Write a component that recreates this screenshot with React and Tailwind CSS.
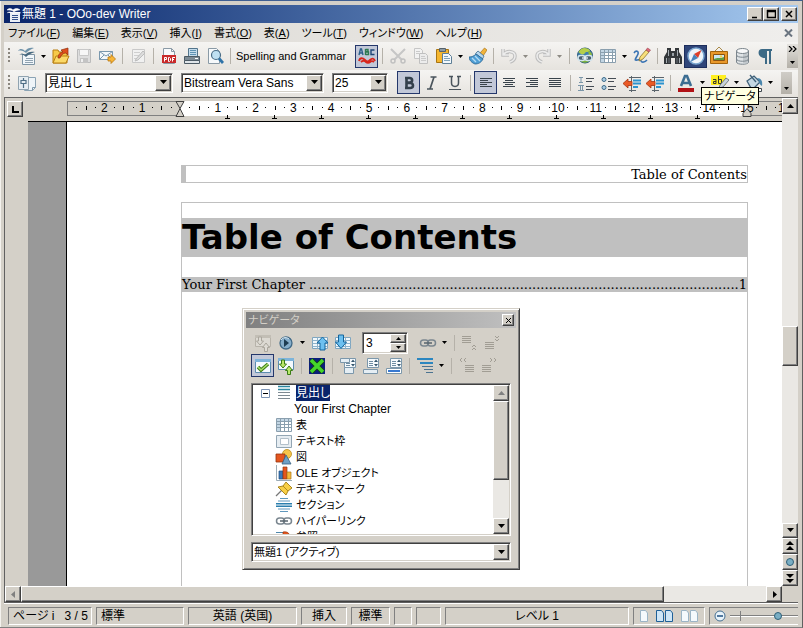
import React, { useState } from 'react'
import clsx from 'clsx'

const UI_FONT = "font-['Liberation_Sans','Noto_Sans_CJK_JP',sans-serif] [font-feature-settings:'palt']"
const raised =
  'bg-[#d4d0c8] border border-t-white border-l-white border-r-[#404040] border-b-[#404040] shadow-[inset_-1px_-1px_0_#808080]'
const sunken = 'border border-t-[#808080] border-l-[#808080] border-r-white border-b-white'
const field =
  'bg-white border border-t-[#808080] border-l-[#808080] border-r-white border-b-white shadow-[inset_1px_1px_0_#404040,inset_-1px_-1px_0_#d4d0c8]'

const Svg = ({ children, w = 18, h = 18 }) => (
  <svg width={w} height={h} viewBox={`0 0 ${w} ${h}`} fill="none" aria-hidden="true" className="shrink-0">
    {children}
  </svg>
)

const Tri = ({ dir = 'down', color = '#000' }) => {
  const d = {
    down: 'M0 1h7L3.500 5z',
    up: 'M0 5h7L3.500 1z',
    left: 'M5 0v7L1 3.500z',
    right: 'M2 0v7l4-3.500z',
  }[dir]
  return (
    <svg width="7" height="7" viewBox="0 0 7 7" aria-hidden="true" className="shrink-0">
      <path d={d} fill={color} />
    </svg>
  )
}

const WriterIcon = () => (
  <Svg>
    <path d="M4.500 7.500h12v10h-12z" fill="#f1f6fa" stroke="#7f95a5" />
    <path d="M0 4c2-3 5-2 7 0 2-3 6-4 9-3-3 1-6 3-8 5C6 4 3 3 0 4z" fill="#6f93aa" />
    <path d="M1 8c2-2 4-2 6 0 2-3 6-4 10-3-4 1-7 3-9 5-2-2-4-3-7-2z" fill="#46687f" />
    <path d="M8 11.500h7M7 13.500h8M7 15.500h8" stroke="#8fa2b0" />
  </Svg>
)

const OpenIcon = () => (
  <Svg>
    <path d="M1 3h5l1 2h8v11H1z" fill="#f7c948" stroke="#b97f10" />
    <path d="M4 9h13l-3 7H1z" fill="#fbd968" stroke="#b97f10" />
    <path d="M6 11c0-4 3-6 5-6L9 3l7-2v7l-2-2c-3 0-5 2-6 5z" fill="#e0501e" stroke="#8f2f0c" strokeWidth=".7" />
  </Svg>
)

const SaveIcon = () => (
  <Svg>
    <path d="M2.500 2.500h13v13h-13z" fill="#dedede" stroke="#bcbcbc" />
    <path d="M4.500 2.500h9v6h-9z" fill="#f7f7f7" stroke="#c8c8c8" />
    <path d="M5 11h8v5H5z" fill="#c4c4c4" />
    <path d="M6 12h2v3H6z" fill="#f0f0f0" />
  </Svg>
)

const MailIcon = () => (
  <Svg>
    <path d="M1.500 4.500h13v8h-13z" fill="#f4f8fb" stroke="#7a98ae" />
    <path d="M1.500 4.500L8 9l6.500-4.500M1.500 12.500L6 8M14.500 12.500L10 8" stroke="#7a98ae" />
    <path d="M10 10h3V7.500L17.500 12 13 16.500V14h-3z" fill="#f7b538" stroke="#b9770e" strokeWidth=".8" />
  </Svg>
)

const EditIcon = () => (
  <Svg>
    <path d="M3.500 2.500h12v13h-12z" fill="#f1f1f1" stroke="#c9c9c9" />
    <path d="M5 5.500h6M5 8.500h5M5 11.500h4" stroke="#cfcfcf" />
    <path d="M7 12l7-8 2 2-7 7-3 1z" fill="#dcdcdc" stroke="#bdbdbd" />
  </Svg>
)

const PdfIcon = () => (
  <Svg>
    <path d="M3.500 1.500h8l3 3v12h-11z" fill="#f7fafc" stroke="#8a9aa6" />
    <path d="M11.500 1.500v3h3" stroke="#8a9aa6" />
    <path d="M2 8h14v8H2z" fill="#c92a2a" />
    <path d="M4.500 14.500v-4h2v2h-2M8.500 10.500v4h1l1-1v-2l-1-1zM12.500 14.500v-4H15M12.500 12.500H14" stroke="#fff" />
  </Svg>
)

const PrintIcon = () => (
  <Svg>
    <path d="M5.500 1.500h9v8h-9z" fill="#c4dcec" stroke="#53758c" />
    <path d="M7 3.500h6M7 5.500h6M7 7.500h6" stroke="#5f93b3" />
    <path d="M1.500 9.500h15v4h-15z" fill="#7d8b95" stroke="#4c5a64" />
    <path d="M1.500 13.500h15v3h-15z" fill="#dfe5e9" stroke="#4c5a64" />
    <path d="M12 11.500h3" stroke="#fff" />
  </Svg>
)

const PreviewIcon = () => (
  <Svg>
    <path d="M2.500 1.500h8l3 3v12h-11z" fill="#f6f9fb" stroke="#8a9aa6" />
    <circle cx="10" cy="8" r="4.500" fill="#bfe0f2" stroke="#4a6c86" strokeWidth="1.200" />
    <path d="M13 11.500l4 4.500" stroke="#2f73a8" strokeWidth="2.800" />
  </Svg>
)

const AbcIcon = () => (
  <Svg>
    <path d="M1 8l1.500-6h1L5 8M1.500 6h3" stroke="#2c5f8a" strokeWidth="1.400" />
    <path d="M7.500 2v6M7.500 2.500H10v2H7.500M7.500 5h3v2.500h-3" stroke="#2d7a50" strokeWidth="1.400" />
    <path d="M16.500 3H13v4.500h3.500" stroke="#1f4778" strokeWidth="1.400" />
    <path d="M1 14c1-4 4-3 6-1s3 2 5 0 4-2 5 1M3 15c2-2 4-1 5 0s3 1 4 0 3-1 4 0" stroke="#d8261c" strokeWidth="1.900" />
  </Svg>
)

const CutIcon = () => (
  <Svg>
    <path d="M2 2l11 11M16 2L5 13" stroke="#c6c6c6" strokeWidth="2" />
    <circle cx="4" cy="14" r="2" stroke="#c0c0c0" strokeWidth="1.500" />
    <circle cx="14" cy="14" r="2" stroke="#c0c0c0" strokeWidth="1.500" />
  </Svg>
)

const CopyIcon = () => (
  <Svg>
    <path d="M2.500 1.500h6l2 2v8h-8z" fill="#f2f2f2" stroke="#c6c6c6" />
    <path d="M7.500 6.500h6l2 2v8h-8z" fill="#ececec" stroke="#c0c0c0" />
    <path d="M4 4.500h4M4 6.500h3M9 9.500h4M9 11.500h5M9 13.500h5" stroke="#cacaca" />
  </Svg>
)

const PasteIcon = () => (
  <Svg>
    <path d="M1.500 2.500h12v13h-12z" fill="#f5b62f" stroke="#a87412" />
    <path d="M4.500 1.500h6v3h-6z" fill="#8d9aa3" stroke="#55626b" />
    <path d="M7.500 6.500h6l3 3v7h-9z" fill="#f3f8fc" stroke="#5e7f96" />
    <path d="M9 9.500h4M9 11.500h6M9 13.500h6" stroke="#7fa3ba" />
  </Svg>
)

const BrushIcon = () => (
  <Svg>
    <path d="M11 6l4.500-5L18 3l-4 6z" fill="#f2b43a" stroke="#a7741b" strokeWidth=".7" />
    <path d="M9 4l6 5-1.500 3L6.500 6.500z" fill="#b9d8ee" stroke="#3f6d8f" strokeWidth=".8" />
    <path d="M7 7l7 5c-2 4-5 5-8 5C3 16 0 13 0 10c3 0 5-1 7-3z" fill="#4f9ed4" stroke="#27628f" strokeWidth=".8" />
    <path d="M3 11l4 4M6 9l5 5" stroke="#b3dcf5" strokeWidth="1.300" />
  </Svg>
)

const UndoIcon = ({ flip }) => (
  <Svg>
    <g transform={flip ? 'translate(18 0) scale(-1 1)' : undefined}>
      <path d="M3 2v6h6M3.500 7.500C7 3 15 4 15 9c0 3-2 5-5 6" stroke="#bdbdbd" strokeWidth="3.500" />
      <path d="M3 2v6h6M3.500 7.500C7 3 15 4 15 9c0 3-2 5-5 6" stroke="#ececec" strokeWidth="1.500" />
    </g>
  </Svg>
)

const GlobeIcon = () => (
  <Svg>
    <circle cx="9" cy="8.500" r="7.500" fill="#3f7fae" stroke="#2a5878" />
    <path d="M2.500 5C5 0 10 0 14 3c-1 3-4 1-5 3s-4 2-6.500-1z" fill="#b5cf4a" />
    <path d="M12 4c2 0 4 2 4 4h-3z" fill="#8fbc3f" />
    <path d="M4 13c2-2 8-2 10 0-2 3-8 4-10 0z" fill="#7bb13d" />
    <rect x="2" y="8.500" width="7" height="5" rx="2.500" fill="#4a6070" stroke="#d4e6ee" strokeWidth="1.500" />
    <rect x="9" y="8.500" width="7" height="5" rx="2.500" fill="#4a6070" stroke="#d4e6ee" strokeWidth="1.500" />
    <path d="M6 11h6" stroke="#eef6fa" strokeWidth="1.300" />
  </Svg>
)

const TableIcon = () => (
  <Svg>
    <path d="M1.500 2.500h15v13h-15z" fill="#fff" stroke="#8a9fae" />
    <path d="M2 3h14v3H2z" fill="#c3d6e4" />
    <path d="M2 3h3v12H2z" fill="#c3d6e4" />
    <path d="M1.500 5.500h15M1.500 8.500h15M1.500 11.500h15M5.500 2.500v13M9.500 2.500v13M13.500 2.500v13" stroke="#8a9fae" />
  </Svg>
)

const DrawIcon = () => (
  <Svg>
    <path d="M1 6c2-3 5-2 4 1s-5 7-1 6 3-1 4 1 4 1 6-1" stroke="#3a74b4" strokeWidth="1.600" />
    <path d="M7 10l6-7 3 2-6 7-4 2z" fill="#f8df7a" stroke="#8d7430" strokeWidth=".8" />
    <path d="M13 3l1.500-2 3 2L16 5z" fill="#e06a78" stroke="#9b4450" strokeWidth=".6" />
  </Svg>
)

const FindIcon = () => (
  <Svg>
    <path d="M3 1h4v3h4V1h4v4l3 5v7h-7v-6H7v6H0v-7l3-5z" fill="#33373a" />
    <path d="M4.500 3v6M13.500 3v6M2.500 11v5M15.500 11v5" stroke="#a5acb1" />
    <path d="M5 11v5M13 11v5" stroke="#6a7176" />
    <path d="M8 6h2v3H8z" fill="#9aa1a6" />
  </Svg>
)

const CompassIcon = () => (
  <Svg>
    <circle cx="9" cy="9" r="8" fill="#f0f5fa" stroke="#7ba7d0" strokeWidth="1.500" />
    <path d="M14.500 3L11 11 7 7z" fill="#e0402a" />
    <path d="M3.500 15L11 11 7 7z" fill="#4a84bc" />
  </Svg>
)

const GalleryIcon = () => (
  <Svg>
    <path d="M9 0L5 4M9 0l4 4" stroke="#a98a4a" />
    <path d="M.5 4.500h17v12H.5z" fill="#e9982a" stroke="#a3620c" />
    <path d="M3.500 7.500h11v6h-11z" fill="#cbe6f2" stroke="#8a5210" />
    <path d="M4 12c3-2 6 0 10-2v3H4z" fill="#5f9c46" />
    <circle cx="11" cy="9.500" r="1.200" fill="#f8d24a" />
  </Svg>
)

const DbIcon = () => (
  <Svg>
    <path d="M3.500 4v11c0 3 12 3 12 0V4z" fill="#dfe3e6" stroke="#7b858c" />
    <path d="M10 6h5v10l-5 1z" fill="#c3c9cd" />
    <ellipse cx="9.500" cy="4" rx="6" ry="2.500" fill="#f8f9fa" stroke="#7b858c" />
    <path d="M3.500 8c0 3 12 3 12 0M3.500 12c0 3 12 3 12 0" stroke="#7b858c" />
    <path d="M15.500 4v11" stroke="#7b858c" />
  </Svg>
)

const PilcrowIcon = () => (
  <Svg>
    <path d="M6 2h10v2h-1v13h-2V4h-2v13H9v-6C1 11 1 2 6 2z" fill="#3c6a86" />
  </Svg>
)

const StylesIcon = () => (
  <Svg>
    <path d="M6.500 3.500h11v10l-3 3h-8z" fill="#eef4f8" stroke="#8ba3b4" />
    <path d="M.5 2.500h10v13H.5z" fill="#e6edf2" stroke="#90a3b0" />
    <path d="M3 6.500h5v3H3zM5.500 4v2M5.500 9.500V14" stroke="#4f6f86" strokeWidth="1.200" />
    <path d="M14.500 16.500v-3h3" stroke="#7d98aa" />
  </Svg>
)

const BoldIcon = () => (
  <Svg>
    <path d="M5 4h4.500c3.500 0 3.500 4.500 0 4.500H6M6 9h4c4 0 4 5 0 5H5M6.500 3v12" stroke="#33404c" strokeWidth="2.600" />
  </Svg>
)
const ItalicIcon = () => (
  <Svg>
    <path d="M7.500 3h6M4 15h6M11 3L7 15" stroke="#4a545c" strokeWidth="1.700" />
  </Svg>
)
const UnderlineIcon = () => (
  <Svg>
    <path d="M5.500 2v7c0 4.500 7 4.500 7 0V2M3 2.500h4M11 2.500h4" stroke="#4a545c" strokeWidth="1.500" />
    <path d="M3 15.500h12" stroke="#4a545c" />
  </Svg>
)

const AlignIcon = ({ kind }) => {
  const rows = {
    left: [[3, 15], [3, 11], [3, 15], [3, 10], [3, 15]],
    center: [[3, 15], [5, 13], [3, 15], [5, 13], [3, 15]],
    right: [[3, 15], [7, 15], [3, 15], [7, 15], [3, 15]],
    justify: [[3, 15], [3, 15], [3, 15], [3, 15], [3, 15]],
  }[kind]
  return (
    <Svg>
      <path d={rows.map(([a, b], i) => `M${a} ${4.5 + i * 2}H${b}`).join('')} stroke="#39434b" />
    </Svg>
  )
}

const NumberingIcon = () => (
  <Svg>
    <path d="M2 3.500h4M4 4v4M2 8.500h4M1 11.500h6M3.500 12v4M5.500 12v4M1 16.500h6" stroke="#7b96a8" />
    <path d="M9 4.500h8M9 7.500h6M9 12.500h8M9 15.500h6" stroke="#444c54" strokeWidth="1.200" />
  </Svg>
)
const BulletsIcon = () => (
  <Svg>
    <circle cx="4" cy="5.500" r="2" fill="#a9cbe2" stroke="#3c6b8a" />
    <circle cx="4" cy="13.500" r="2" fill="#a9cbe2" stroke="#3c6b8a" />
    <path d="M8 4.500h8M8 7.500h6M8 12.500h8M8 15.500h6" stroke="#444c54" strokeWidth="1.200" />
  </Svg>
)
const IndentIcon = () => (
  <Svg>
    <path d="M6 3.500h12M6 16.500h7M8.500 2v16" stroke="#5b646b" />
    <path d="M10 6.500h8M10 9.500h8M10 13h5" stroke="#2c93cf" strokeWidth="2" />
    <path d="M0 9.500L5 5v2.500h4v4H5V14z" fill="#ea5a26" stroke="#a53410" strokeWidth=".8" />
  </Svg>
)
const FontColorIcon = () => (
  <Svg>
    <path d="M4 12L8 2h2l4 10M5.500 9h7" stroke="#3c6d92" strokeWidth="2.600" />
    <path d="M1 14h16v4H1z" fill="#b11116" />
  </Svg>
)
const HighlightIcon = () => (
  <Svg>
    <path d="M0 1h15v10H0z" fill="#ffee20" />
    <path d="M2 5.500h3v4H2.500v-2H5M7.500 2v7.500h3v-4H8" stroke="#3b3b2a" />
    <path d="M9 11l6-7 3 2-6 7-4 1z" fill="#c9d3da" stroke="#56646e" strokeWidth=".8" />
    <path d="M2 14h11v3H2z" fill="#ffee20" />
  </Svg>
)
const FillIcon = () => (
  <Svg>
    <path d="M2 7l7-5 6 6-6 6H6z" fill="#c5d8e4" stroke="#3f6078" strokeWidth="1.300" />
    <path d="M5 1l6 7" stroke="#3f6078" strokeWidth="1.300" />
    <path d="M12 4c4 0 6 3 5 8-2-1-3-3-3-5z" fill="#4a86ad" />
    <path d="M2.500 14.500h14v3h-14z" fill="#fff" stroke="#40484e" />
  </Svg>
)

// navigator
const SwapIcon = ({ active }) => (
  <Svg>
    <path d="M1.500 1.500h15v11h-15z" fill={active ? '#f4fafe' : '#dcd9d2'} stroke={active ? '#5d8db0' : '#b7b3aa'} />
    <path d="M1 1h16v3H1z" fill={active ? '#7db4da' : '#c2beb5'} />
    <path d="M4.500 3h3v4h2L6 11 2.500 7h2zM10.500 17.500h3v-4h2L12 9l-3.500 4.500h2z" fill={active ? '#b9e86a' : '#dedbd4'} stroke={active ? '#3b7d16' : '#aaa69d'} />
  </Svg>
)
const NavigateIcon = () => (
  <Svg>
    <circle cx="9" cy="9" r="6" fill="#86aecb" stroke="#3f6886" strokeWidth="1.300" />
    <path d="M7 5l5 4-5 4z" fill="#1d3c52" />
    <path d="M4 6c2-3 6-3 8-1" stroke="#dcecf6" />
  </Svg>
)
const PageArrowIcon = ({ up }) => (
  <Svg>
    <path d="M1.500 3.500h15v11h-15z" fill="#f1f8fc" stroke="#7fa6c0" />
    <path d="M1.500 6.500h15M1.500 9.500h15M1.500 12.500h15M6.500 3.500v11M11.500 3.500v11" stroke="#8fb3cb" />
    {up ? (
      <path d="M11.500 3L17 9h-3v7H9V9H6z" fill="#6cc0f0" stroke="#14659c" />
    ) : (
      <path d="M4.500 1h5v7h3L7 14.500 1.500 8h3z" fill="#6cc0f0" stroke="#14659c" />
    )}
  </Svg>
)
const ChainIcon = () => (
  <Svg>
    <rect x="1.500" y="6" width="8" height="6" rx="3" stroke="#7a868f" strokeWidth="1.500" />
    <rect x="8.500" y="6" width="8" height="6" rx="3" stroke="#7a868f" strokeWidth="1.500" />
    <path d="M5 9h8" stroke="#59656e" strokeWidth="1.500" />
  </Svg>
)
const LevelIcon = ({ marks }) => (
  <Svg>
    <path d={marks.lines} stroke="#a19d94" />
    <path d={marks.arrows} stroke="#a19d94" />
  </Svg>
)
const ListBoxToggleIcon = () => (
  <Svg>
    <path d="M1.500 2.500h15v13h-15z" fill="#f6fbff" stroke="#5d8db0" />
    <path d="M1 2h16v3H1z" fill="#7db4da" />
    <path d="M4 10l3 3 7-6" stroke="#3b7d16" strokeWidth="3.500" />
    <path d="M4 10l3 3 7-6" stroke="#a9e06a" strokeWidth="1.500" />
  </Svg>
)
const ReminderIcon = () => (
  <Svg>
    <path d="M1 1h16v16H1z" fill="#0b1f7a" />
    <path d="M3 3l12 12M15 3L3 15" stroke="#14430c" strokeWidth="5" />
    <path d="M3 3l12 12M15 3L3 15" stroke="#45d62c" strokeWidth="3.500" />
  </Svg>
)
const PagePartIcon = ({ part }) => (
  <Svg>
    <path d="M5.500 1.500h11v9h-11z" fill="#f5fafd" stroke="#7b97ab" />
    <path d="M7 4.500h4M7 6.500h4M7 8.500h4" stroke="#6f8da3" />
    <path d="M12 5l2-2.500L16 5zM12 7l2 2.500L16 7z" fill="#35566d" />
    {part === 'header' && <path d="M1.500 1.500h9v4h-9zM5.500 10.500h9v6h-9z" fill="#e5eef4" stroke="#7b97ab" />}
    {part === 'footer' && <path d="M1.500 12.500h14v4h-14z" fill="#e5eef4" stroke="#7b97ab" />}
    {part === 'anchor' && <path d="M1.500 11.500h15v5h-15z" fill="#fff" stroke="#7b97ab" />}
    {part === 'anchor' && <path d="M3 14h12" stroke="#3979d0" strokeWidth="2" />}
  </Svg>
)
const OutlineIcon = () => (
  <Svg>
    <path d="M1 2h16M4 6h13" stroke="#2b86c0" strokeWidth="2" />
    <path d="M6 9.500h11M8 12.500h9M10 15.500h7" stroke="#4b7391" />
  </Svg>
)

// tree
const HeadingsIcon = () => (
  <Svg h={16}>
    <path d="M3 1.500h12M3 4.500h12" stroke="#2b86a0" strokeWidth="1.400" />
    <path d="M3 7.500h12M3 10.500h12M3 13.500h12" stroke="#7e8a92" />
  </Svg>
)
const FrameIcon = () => (
  <Svg h={16}>
    <path d="M1.500 2.500h15v12h-15z" fill="#e6edf2" stroke="#93a6b4" />
    <path d="M5.500 5.500h8v6h-8z" fill="#fff" stroke="#b3c0ca" />
  </Svg>
)
const ShapesIcon = () => (
  <Svg h={16}>
    <circle cx="12" cy="5" r="4.500" fill="#f7c64a" stroke="#b98a1c" strokeWidth=".8" />
    <path d="M1 5h9v8H1z" fill="#e4561f" stroke="#95330c" strokeWidth=".8" />
    <path d="M11 6l5 9H7z" fill="#6f9fc4" stroke="#355f7f" strokeWidth=".8" />
  </Svg>
)
const OleIcon = () => (
  <Svg h={16}>
    <path d="M1.500 0v15.500H17" stroke="#9aabb6" />
    <path d="M4 6h4v8H4z" fill="#3a78ba" stroke="#1f4d7e" strokeWidth=".7" />
    <path d="M8 2h4v12H8z" fill="#e4561f" stroke="#95330c" strokeWidth=".7" />
    <path d="M12 7h4v7h-4z" fill="#f6b93b" stroke="#a8761a" strokeWidth=".7" />
  </Svg>
)
const PinIcon = () => (
  <Svg h={16}>
    <path d="M1 15l6-6" stroke="#777" strokeWidth="1.300" />
    <path d="M3 6l5-1 3-4 6 6-4 3-2 4z" fill="#f8cf45" stroke="#a07c14" strokeWidth=".9" />
    <path d="M8 5l5 5" stroke="#a07c14" strokeWidth=".8" />
  </Svg>
)
const SectionIcon = () => (
  <Svg h={16}>
    <path d="M5 1.500h8M3 4h12M3 12h12M5 14.500h8" stroke="#5f97bd" />
    <path d="M1 6.700h16M1 9.300h16" stroke="#2b7fae" strokeWidth="1.500" />
  </Svg>
)
const ReferenceIcon = () => (
  <Svg h={16}>
    <path d="M1 3.500h9M1 5.500h9M1 7.500h9M1 10h9" stroke="#4f87ab" />
    <path d="M8 3c5-1 7 2 7 6h2l-4 5-4-5h2c0-2-1-3-3-3z" fill="#e4561f" stroke="#95330c" strokeWidth=".7" />
  </Svg>
)

const Sep = () => (
  <span className="w-2 h-4 flex justify-center shrink-0">
    <span className="w-px bg-[#b5b1a9]" />
  </span>
)

const Tool = ({ label, on, children }) => (
  <button
    type="button"
    aria-label={label}
    className={clsx(
      'w-[23px] h-[23px] shrink-0 flex items-center justify-center',
      on === 'light' && 'bg-[#c2c8d8] border border-[#24376b]',
      on === 'dark' && 'bg-[#2f4579] border border-[#1c2d5c]'
    )}
  >
    {children}
  </button>
)

const Drop = ({ label, dim }) => (
  <button type="button" aria-label={label} className="w-[11px] h-[23px] shrink-0 flex items-center justify-center">
    <svg width="5" height="3" viewBox="0 0 5 3" aria-hidden="true">
      <path d="M0 0h5L2.500 3z" fill={dim ? '#8d8a84' : '#000'} />
    </svg>
  </button>
)

const Grip = () => (
  <svg width="3" height="18" viewBox="0 0 3 18" aria-hidden="true" className="shrink-0">
    <path d="M1 1v2M1 5v2M1 9v2M1 13v2" stroke="#8a867e" strokeWidth="2" />
  </svg>
)

const Combo = ({ label, value, className }) => (
  <label className={clsx('relative flex items-center h-5 shrink-0', field, className)}>
    <select aria-label={label} defaultValue={value} className="appearance-none bg-transparent w-full h-full pl-[2px] leading-4 outline-none">
      <option>{value}</option>
    </select>
    <span className={clsx('absolute right-px top-px bottom-px w-4 flex items-center justify-center pointer-events-none', raised)}>
      <Tri />
    </span>
  </label>
)

const Menu = ({ text, k }) => (
  <button type="button" className="whitespace-nowrap">
    {text}(<u className="underline-offset-1">{k}</u>)
  </button>
)

const ScrollBtn = ({ label, children, className }) => (
  <button type="button" aria-label={label} className={clsx('shrink-0 flex flex-col items-center justify-center', raised, className)}>
    {children}
  </button>
)

const MENUS = [
  ['ファイル', 'F'], ['編集', 'E'], ['表示', 'V'], ['挿入', 'I'], ['書式', 'O'],
  ['表', 'A'], ['ツール', 'T'], ['ウィンドウ', 'W'], ['ヘルプ', 'H'],
]

const TREE = [
  ['表', TableIcon],
  ['テキスト枠', FrameIcon],
  ['図', ShapesIcon],
  ['OLE オブジェクト', OleIcon],
  ['テキストマーク', PinIcon],
  ['セクション', SectionIcon],
  ['ハイパーリンク', ChainIcon],
  ['参照', ReferenceIcon],
]

const TitleBar = () => (
  <header className="h-[18px] flex items-center pl-[3px] pr-px bg-linear-to-r from-[#0a246a] to-[#a6caf0] text-white">
    <svg width="14" height="15" viewBox="0 0 14 15" aria-hidden="true">
      <path d="M3 5h10v10H3z" fill="#e9eef6" />
      <path d="M0 3c3-3 5-1 6 0 2-2 5-2 7 0-3 0-5 1-6 2C5 3 3 3 0 3zM0 6c3-2 5-1 6 1 2-2 5-2 8-1" fill="#fff" stroke="#fff" strokeWidth=".5" />
      <path d="M5 8.500h6M5 10.500h6M5 12.500h6" stroke="#33508c" />
    </svg>
    <h1 className="flex-1 pl-px leading-[18px] whitespace-nowrap">無題 1 - OOo-dev Writer</h1>
    <div className="flex">
      {[
        ['最小化', 'M2 8.500h5'],
        ['最大化', 'M1.500 1v7.500h8V1.500H1M1 2.500h9'],
        ['閉じる', 'M2 2l6 6M8 2L2 8'],
      ].map(([label, d], i) => (
        <button key={label} type="button" aria-label={label} className={clsx('w-4 h-[14px] flex items-center justify-center', raised, i === 2 && 'ml-[2px]')}>
          <svg width="10" height="10" viewBox="0 0 10 10" aria-hidden="true">
            <path d={d} stroke="#000" strokeWidth="1.500" fill="none" />
          </svg>
        </button>
      ))}
    </div>
  </header>
)

const StandardToolbar = () => (
  <div role="toolbar" className="h-7 flex items-center pl-1 bg-linear-to-b from-[#f5f4f2] to-[#e6e3de]">
    <Grip />
    <span className="w-1 shrink-0" />
    <Tool label="新規"><WriterIcon /></Tool>
    <Drop label="新規メニュー" />
    <Tool label="開く"><OpenIcon /></Tool>
    <Tool label="保存"><SaveIcon /></Tool>
    <Tool label="メール"><MailIcon /></Tool>
    <Sep />
    <Tool label="編集モード"><EditIcon /></Tool>
    <Sep />
    <Tool label="PDF"><PdfIcon /></Tool>
    <Tool label="印刷"><PrintIcon /></Tool>
    <Tool label="プレビュー"><PreviewIcon /></Tool>
    <Sep />
    <button type="button" className="w-[121px] pl-[2px] text-left text-[11px] whitespace-nowrap shrink-0">Spelling and Grammar</button>
    <Tool label="自動スペルチェック" on="light"><AbcIcon /></Tool>
    <Sep />
    <Tool label="切り取り"><CutIcon /></Tool>
    <Tool label="コピー"><CopyIcon /></Tool>
    <Tool label="貼り付け"><PasteIcon /></Tool>
    <Drop label="貼り付けメニュー" />
    <Tool label="書式の複写"><BrushIcon /></Tool>
    <Sep />
    <Tool label="元に戻す"><UndoIcon /></Tool>
    <Drop label="元に戻すメニュー" dim />
    <Tool label="やり直し"><UndoIcon flip /></Tool>
    <Drop label="やり直しメニュー" dim />
    <Sep />
    <Tool label="ハイパーリンク"><GlobeIcon /></Tool>
    <Tool label="表"><TableIcon /></Tool>
    <Drop label="表メニュー" />
    <Tool label="描画"><DrawIcon /></Tool>
    <Sep />
    <Tool label="検索"><FindIcon /></Tool>
    <Tool label="ナビゲータ" on="dark"><CompassIcon /></Tool>
    <Tool label="ギャラリー"><GalleryIcon /></Tool>
    <Tool label="データソース"><DbIcon /></Tool>
    <Tool label="編集記号"><PilcrowIcon /></Tool>
    <button type="button" aria-label="その他" className="ml-auto w-[11px] h-6 shrink-0 flex flex-col items-center justify-between pt-[2px] pb-1 bg-linear-to-b from-[#e4e2de] to-[#b4b0a8]">
      <svg width="9" height="6" viewBox="0 0 9 6" aria-hidden="true">
        <path d="M1 0l3 3-3 3M5 0l3 3-3 3" stroke="#000" strokeWidth="1.200" fill="none" />
      </svg>
      <svg width="5" height="3" viewBox="0 0 5 3" aria-hidden="true"><path d="M0 0h5L2.500 3z" /></svg>
    </button>
  </div>
)

const FormatToolbar = () => (
  <div role="toolbar" className="h-[27px] flex items-center pl-1 pb-[2px] bg-linear-to-b from-[#f5f4f2] to-[#e6e3de]">
    <Grip />
    <span className="w-1 shrink-0" />
    <Tool label="スタイルと書式"><StylesIcon /></Tool>
    <Combo label="スタイル" value="見出し 1" className="ml-[7px] w-32" />
    <Combo label="フォント" value="Bitstream Vera Sans" className="ml-2 w-[143px]" />
    <Combo label="サイズ" value="25" className="ml-2 w-14 mr-[9px]" />
    <Tool label="太字" on="light"><BoldIcon /></Tool>
    <Tool label="斜体"><ItalicIcon /></Tool>
    <Tool label="下線"><UnderlineIcon /></Tool>
    <Sep />
    <Tool label="左揃え" on="light"><AlignIcon kind="left" /></Tool>
    <Tool label="中央揃え"><AlignIcon kind="center" /></Tool>
    <Tool label="右揃え"><AlignIcon kind="right" /></Tool>
    <Tool label="両端揃え"><AlignIcon kind="justify" /></Tool>
    <Sep />
    <Tool label="番号付け"><NumberingIcon /></Tool>
    <Tool label="箇条書き"><BulletsIcon /></Tool>
    <Tool label="インデント減"><IndentIcon /></Tool>
    <Tool label="インデント増"><IndentIcon /></Tool>
    <Sep />
    <Tool label="フォントの色"><FontColorIcon /></Tool>
    <Drop label="フォントの色メニュー" />
    <Tool label="強調表示"><HighlightIcon /></Tool>
    <Drop label="強調表示メニュー" />
    <Tool label="背景色"><FillIcon /></Tool>
    <Drop label="背景色メニュー" />
    <button type="button" aria-label="その他" className="ml-auto mr-[6px] w-[11px] h-[22px] shrink-0 flex items-end justify-center pb-1 bg-linear-to-b from-[#d0cdc7] to-[#b4b0a8]">
      <svg width="5" height="3" viewBox="0 0 5 3" aria-hidden="true"><path d="M0 0h5L2.500 3z" /></svg>
    </button>
  </div>
)

const CM = 37.8
const ZERO = 113

const Ruler = () => {
  const units = Array.from({ length: 20 }, (_, i) => i - 3)
  return (
    <div className="h-[23px] flex items-start pl-[2px] bg-[#d4d0c8]">
      <button type="button" aria-label="タブの種類" className={clsx('mt-[3px] w-4 h-4 shrink-0 flex items-center justify-center', raised)}>
        <svg width="7" height="7" viewBox="0 0 7 7" aria-hidden="true">
          <path d="M1 0v6h6" stroke="#000" strokeWidth="2" fill="none" />
        </svg>
      </button>
      <div className="ml-11 flex-1 overflow-hidden">
        <svg width="1000" height="23" viewBox="0 -3 1000 23" className="block max-w-none">
          <rect x=".5" y=".5" width="999" height="14" fill="#d4d0c8" stroke="#808080" />
          <rect x={ZERO} y="0" width={CM * 15} height="15" fill="#fff" />
          {units.map((n) => {
            const x = ZERO + n * CM
            return (
              <g key={n}>
                {n !== 0 && n > -3 && (
                  <text x={x} y="11" fontSize="12" textAnchor="middle">{Math.abs(n)}</text>
                )}
                <path d={`M${Math.round(x + CM / 4)} 6.500h1M${Math.round(x + (CM * 3) / 4)} 6.500h1`} stroke="#000" />
                <path d={`M${Math.round(x + CM / 2) + 0.5} 5v4`} stroke="#000" />
              </g>
            )
          })}
          {Array.from({ length: 11 }, (_, i) => (
            <path key={i} d={`M${Math.round(ZERO + (i + 1) * 47) + 0.5} 14v4M${Math.round(ZERO + (i + 1) * 47) - 2} 17.500h5`} stroke="#000" />
          ))}
          <path d={`M${ZERO - 4} .5h8l-4 7zM${ZERO - 4} 15.500h8l-4-8z`} fill="#d4d0c8" stroke="#404040" />
          <path d={`M${ZERO + 567 - 4} 15.500v-3l4-5 4 5v3z`} fill="#d4d0c8" stroke="#404040" />
        </svg>
      </div>
    </div>
  )
}

const Page = () => (
  <div className="flex-1 min-h-0 flex overflow-hidden">
    <div className="w-[23px] bg-[#d4d0c8]" />
    <div className="w-[39px] bg-[#999999] border-t border-r border-black" />
    <article className="flex-1 bg-white border-t border-black pl-[114px] pr-[34px] pt-[43px] flex flex-col font-['DejaVu_Serif',serif] text-[13px] leading-4">
      <header className="h-[18px] border border-[#c0c0c0] border-l-[5px] text-right leading-[17px]">Table of Contents</header>
      <section className="mt-[19px] flex-1 border border-b-0 border-[#c0c0c0]">
        <h2 className="mt-[15px] bg-[#c0c0c0] font-['DejaVu_Sans',sans-serif] font-bold text-[34px] leading-[39px]">Table of Contents</h2>
        <p className="mt-5 bg-[#c0c0c0] flex leading-[15px] whitespace-nowrap">
          <span className="shrink-0">Your First Chapter</span>
          <span className="flex-1 min-w-0 text-right">{'.'.repeat(104)}</span>
          <span>1</span>
        </p>
      </section>
    </article>
  </div>
)

const HScroll = () => (
  <div className="h-4 flex bg-[#eae8e4]">
    <ScrollBtn label="左へ" className="w-4"><Tri dir="left" color="#808080" /></ScrollBtn>
    <div className={clsx('flex-[644]', raised)} />
    <div className="flex-[102]" />
    <ScrollBtn label="右へ" className="w-4"><Tri dir="right" /></ScrollBtn>
  </div>
)

const VScroll = () => (
  <div className="w-4 shrink-0 flex flex-col bg-[#eae8e4]">
    <ScrollBtn label="上へ" className="h-4"><Tri dir="up" /></ScrollBtn>
    <div className="flex-[213]" />
    <div className={clsx('h-10', raised)} />
    <div className="flex-[158]" />
    <ScrollBtn label="下へ" className="h-[15px]"><Tri /></ScrollBtn>
    <ScrollBtn label="前のページ" className="h-4">
      <svg width="8" height="10" viewBox="0 0 8 10" aria-hidden="true"><path d="M0 4h8L4 0zM0 9h8L4 5z" /></svg>
    </ScrollBtn>
    <ScrollBtn label="ナビゲーション" className="h-4">
      <svg width="10" height="10" viewBox="0 0 10 10" aria-hidden="true"><circle cx="5" cy="5" r="3.500" fill="#79aec4" stroke="#2f5f78" /></svg>
    </ScrollBtn>
    <ScrollBtn label="次のページ" className="h-4">
      <svg width="8" height="10" viewBox="0 0 8 10" aria-hidden="true"><path d="M0 1h8L4 5zM0 6h8l-4 4z" /></svg>
    </ScrollBtn>
    <div className="h-4 bg-[#d4d0c8]" />
  </div>
)

const Navigator = () => {
  const [level, setLevel] = useState('3')
  return (
    <aside className="absolute left-[242px] top-[307px] w-[278px] p-[3px] pb-[7px] bg-[#d4d0c8] border border-t-[#d4d0c8] border-l-[#d4d0c8] border-r-[#404040] border-b-[#404040] shadow-[inset_1px_1px_0_#fff,inset_-1px_-1px_0_#808080]">
      <div className="h-4 flex items-center pl-[2px] pr-[2px] bg-linear-to-r from-[#808080] to-[#c0c0c0] text-[#d4d0c8]">
        <h2 className="flex-1 text-[11px] leading-4">ナビゲータ</h2>
        <button type="button" aria-label="閉じる" className={clsx('w-3 h-3 flex items-center justify-center', raised)}>
          <svg width="7" height="7" viewBox="0 0 7 7" aria-hidden="true"><path d="M1 1l5 5M6 1L1 6" stroke="#000" /></svg>
        </button>
      </div>
      <div className="pl-[5px] pr-[5px] pt-[3px]">
        <div className="h-[23px] flex items-center">
          <Tool label="切り替え"><SwapIcon /></Tool>
          <Tool label="ナビゲーション"><NavigateIcon /></Tool>
          <Drop label="ナビゲーションメニュー" />
          <Tool label="前へ"><PageArrowIcon up /></Tool>
          <Tool label="次へ"><PageArrowIcon /></Tool>
          <span className={clsx('ml-2 mr-2 w-[46px] h-[22px] flex shrink-0 p-px', field)}>
            <input aria-label="見出しレベル" value={level} onChange={(e) => setLevel(e.target.value)} className="w-0 flex-1 pl-[2px] outline-none" />
            <span className="w-4 flex flex-col">
              <ScrollBtn label="増やす" className="flex-1">
                <svg width="5" height="3" viewBox="0 0 5 3" aria-hidden="true"><path d="M0 3h5L2.500 0z" /></svg>
              </ScrollBtn>
              <ScrollBtn label="減らす" className="flex-1">
                <svg width="5" height="3" viewBox="0 0 5 3" aria-hidden="true"><path d="M0 0h5L2.500 3z" /></svg>
              </ScrollBtn>
            </span>
          </span>
          <Tool label="ドラッグモード"><ChainIcon /></Tool>
          <Drop label="ドラッグモードメニュー" />
          <Sep />
          <Tool label="章を上へ"><LevelIcon marks={{ lines: 'M1 2.500h9M1 4.500h9M1 6.500h9M1 8.500h9', arrows: 'M11 13l2-2 2 2M11 16l2-2 2 2' }} /></Tool>
          <Tool label="章を下へ"><LevelIcon marks={{ lines: 'M1 8.500h9M1 10.500h9M1 12.500h9M1 14.500h9', arrows: 'M11 2l2 2 2-2M11 5l2 2 2-2' }} /></Tool>
        </div>
        <div className="h-[23px] flex items-center">
          <Tool label="リストボックス" on="light"><ListBoxToggleIcon /></Tool>
          <Tool label="内容の表示"><SwapIcon active /></Tool>
          <Sep />
          <Tool label="目印"><ReminderIcon /></Tool>
          <Sep />
          <Tool label="ヘッダー"><PagePartIcon part="header" /></Tool>
          <Tool label="フッター"><PagePartIcon part="footer" /></Tool>
          <Tool label="脚注"><PagePartIcon part="anchor" /></Tool>
          <Sep />
          <Tool label="アウトライン"><OutlineIcon /></Tool>
          <Drop label="アウトラインメニュー" />
          <Sep />
          <Tool label="レベル上げ"><LevelIcon marks={{ lines: 'M7 8.500h9M7 10.500h9M7 12.500h9M7 14.500h9', arrows: 'M4 1L2 3l2 2M8 1L6 3l2 2' }} /></Tool>
          <Tool label="レベル下げ"><LevelIcon marks={{ lines: 'M1 8.500h9M1 10.500h9M1 12.500h9M1 14.500h9', arrows: 'M9 1l2 2-2 2M13 1l2 2-2 2' }} /></Tool>
        </div>
        <div className={clsx('mt-[6px] h-[153px] flex p-px overflow-hidden', field)}>
          <ul className="flex-1 min-w-0 overflow-hidden leading-4">
            <li>
              <div className="h-4 flex items-center pl-2">
                <svg width="9" height="9" viewBox="0 0 9 9" aria-hidden="true">
                  <path d="M.5.5h8v8h-8z" fill="#fff" stroke="#7b93b5" />
                  <path d="M2 4.500h5" stroke="#000" />
                </svg>
                <span className="ml-[5px] flex"><HeadingsIcon /></span>
                <span className="ml-[3px] bg-[#0a246a] text-white">見出し</span>
              </div>
              <ul>
                <li className="h-4 pl-[41px]">Your First Chapter</li>
              </ul>
            </li>
            {TREE.map(([name, Icon]) => (
              <li key={name} className="h-4 flex items-center pl-[22px] text-[11px]">
                <Icon />
                <span className="ml-[3px] whitespace-nowrap">{name}</span>
              </li>
            ))}
          </ul>
          <div className="w-4 flex flex-col bg-[#eae8e4]">
            <ScrollBtn label="上へ" className="h-4"><Tri dir="up" color="#808080" /></ScrollBtn>
            <div className={clsx('h-[79px]', raised)} />
            <div className="flex-1" />
            <ScrollBtn label="下へ" className="h-4"><Tri /></ScrollBtn>
          </div>
        </div>
        <Combo label="文書" value="無題1 (アクティブ)" className="mt-[6px] w-full text-[11px]" />
      </div>
    </aside>
  )
}

const cell = clsx('h-[18px] flex items-center whitespace-nowrap', sunken)

const ViewIcon = ({ pages, on }) => (
  <svg width={pages * 9 + 1} height="12" viewBox={`0 0 ${pages * 9 + 1} 12`} fill="none" aria-hidden="true">
    {Array.from({ length: pages }, (_, i) => (
      <path key={i} d={`M${i * 9 + 1.5} .5h5l2 2.500v8.500h-7z`} fill={on ? '#cfe6f7' : '#f4f9fd'} stroke={on ? '#1f6098' : '#9bb4c6'} />
    ))}
  </svg>
)

const StatusBar = () => (
  <footer className="h-6 flex items-center gap-1 pl-1 border-t border-white overflow-hidden">
    <span className={clsx(cell, 'w-[84px] shrink-0 pl-1')}>ページ i&nbsp;&nbsp; 3 / 5</span>
    <span className={clsx(cell, 'w-[88px] shrink-0 pl-1')}>標準</span>
    <span className={clsx(cell, 'w-[109px] shrink-0 justify-center')}>英語 (英国)</span>
    <span className={clsx(cell, 'w-[46px] shrink-0 justify-center')}>挿入</span>
    <span className={clsx(cell, 'w-[39px] shrink-0 justify-center')}>標準</span>
    <span className={clsx(cell, 'w-[18px] shrink-0')} />
    <span className={clsx(cell, 'w-[25px] shrink-0')} />
    <span className={clsx(cell, 'flex-1 justify-center')}>レベル 1</span>
    <span className={clsx(cell, 'w-[72px] shrink-0 justify-center gap-[6px]')}>
      <button type="button" aria-label="単一ページ"><ViewIcon pages={1} /></button>
      <button type="button" aria-label="複数ページ"><ViewIcon pages={2} on /></button>
      <button type="button" aria-label="ブック"><ViewIcon pages={2} /></button>
    </span>
    <span className={clsx(cell, 'w-[89px] shrink-0 pl-1 border-r-0 overflow-hidden')}>
      <button type="button" aria-label="縮小" className="shrink-0">
        <svg width="12" height="12" viewBox="0 0 12 12" fill="none" aria-hidden="true">
          <circle cx="6" cy="6" r="5" fill="#e8f3fa" stroke="#456f92" />
          <path d="M3 6h6" stroke="#205080" strokeWidth="1.500" />
        </svg>
      </button>
      <input
        type="range"
        aria-label="ズーム"
        defaultValue="50"
        className="ml-1 w-[96px] h-4 shrink-0 appearance-none bg-[linear-gradient(#808080,#808080),linear-gradient(#808080,#808080),linear-gradient(#fff,#fff)] bg-no-repeat bg-[position:0_7px,10px_3px,0_8px] bg-[length:100%_1px,1px_10px,100%_1px] [&::-webkit-slider-thumb]:appearance-none [&::-webkit-slider-thumb]:w-2 [&::-webkit-slider-thumb]:h-2 [&::-webkit-slider-thumb]:rounded-full [&::-webkit-slider-thumb]:bg-[#79aec4] [&::-webkit-slider-thumb]:border [&::-webkit-slider-thumb]:border-[#2f5f78]"
      />
    </span>
  </footer>
)

const App = () => (
  <div className={clsx('relative h-screen min-h-96 flex flex-col overflow-hidden bg-[#d4d0c8] text-black text-[12px] leading-4 border-t border-t-[#3f5f92] border-b border-b-[#808080] border-r border-r-[#606060]', UI_FONT)}>
    <div className="flex-1 min-h-0 flex flex-col pt-1 pl-[3px] pr-1 border-l border-[#f4f2ee]">
      <TitleBar />
      <nav className="h-[19px] flex items-center gap-3 pl-1 text-[11px] bg-linear-to-r from-[#dcd9d3] to-[#efeeec]">
        {MENUS.map(([text, k]) => (
          <Menu key={k} text={text} k={k} />
        ))}
        <button type="button" aria-label="文書を閉じる" className="ml-auto mr-[5px]">
          <svg width="9" height="8" viewBox="0 0 9 8" aria-hidden="true"><path d="M1 .5l7 7M8 .5l-7 7" stroke="#6a7480" strokeWidth="2" /></svg>
        </button>
      </nav>
      <StandardToolbar />
      <FormatToolbar />
      <main className="flex-1 min-h-0 flex border-t border-l border-t-[#606060] border-l-[#606060] border-b border-b-[#606060]">
        <div className="flex-1 min-w-0 flex flex-col">
          <Ruler />
          <Page />
          <HScroll />
        </div>
        <VScroll />
      </main>
      <StatusBar />
    </div>
    <div role="tooltip" className="absolute left-[701px] top-[86px] h-[18px] px-[2px] text-[11px] leading-4 whitespace-nowrap bg-[#ffffe1] border border-black">ナビゲータ</div>
    <Navigator />
  </div>
)

export default App
